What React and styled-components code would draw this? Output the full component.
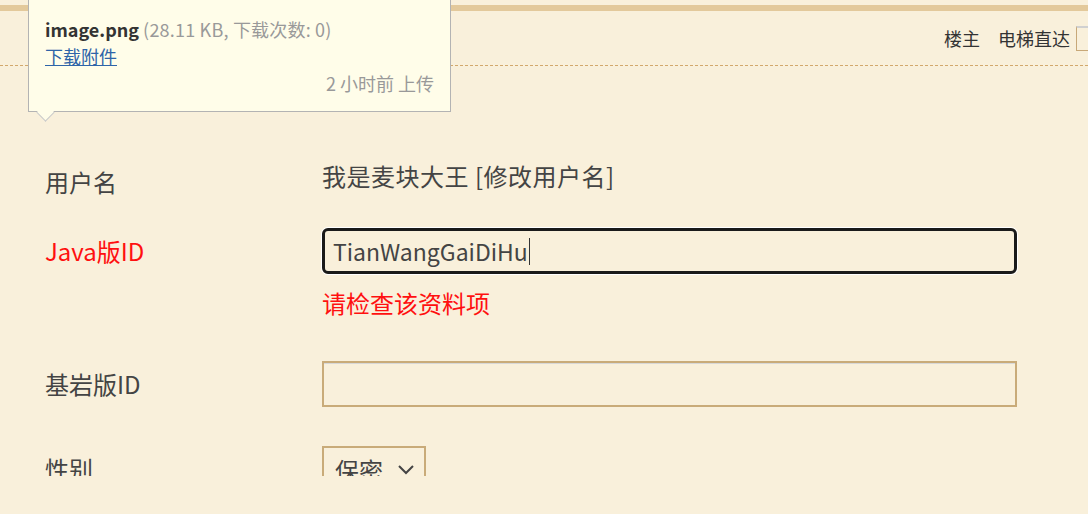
import React from 'react'
import styled, { createGlobalStyle } from 'styled-components'

const GlobalStyle = createGlobalStyle`
body {
    margin: 0;
    background: #f9f0db;
    font-family: "Noto Sans CJK SC", "Noto Sans", sans-serif;
    color: #444;
}
`

const Page = styled.div`
position: relative;
height: 476px;
overflow: hidden;
`

const Header = styled.div`
margin-top: 5px;
border-top: 6px solid #e3c99b;
height: 54px;
border-bottom: 1px dashed #d2a86c;
display: flex;
justify-content: flex-end;
align-items: center;
gap: 18px;
font-size: 18px;
color: #333;
`

const NavItem = styled.span`
line-height: 24px;
`

const JumpGroup = styled.div`
display: flex;
align-items: center;
gap: 6px;
margin-right: -16px;
`

const JumpInput = styled.div`
width: 26px;
height: 22px;
border: 1px solid #c8a878;
border-top: 2px solid #d0d0d0;
`

const Tip = styled.div`
position: absolute;
left: 28px;
top: -1px;
width: 389px;
padding: 16px 16px 14px 16px;
background: #fffde9;
border: 1px solid #b3b3b3;
font-size: 18px;
line-height: 27px;
&::after {
    content: "";
    position: absolute;
    left: 10px;
    bottom: -8px;
    width: 12px;
    height: 12px;
    background: #fffde9;
    border-right: 1px solid #c8c8c8;
    border-bottom: 1px solid #c8c8c8;
    transform: rotate(45deg);
}
`

const FileName = styled.b`
color: #333;
font-weight: 700;
`

const Muted = styled.span`
color: #999;
letter-spacing: 0.2px;
`

const DownloadLink = styled.a`
color: #2e64a8;
text-decoration: underline;
display: block;
`

const TipTime = styled.div`
color: #999;
text-align: right;
`

const Form = styled.div`
padding: 89px 0 0 45px;
`

const Row = styled.div`
display: grid;
grid-template-columns: 277px 695px;
align-items: center;
margin-bottom: ${props => props.$mb}px;
`

const Label = styled.div`
font-size: 24px;
line-height: 46px;
color: ${props => (props.$error ? '#ff1010' : '#444')};
padding-top: ${props => props.$shift || 0}px;
`

const Value = styled.div`
align-self: start;
margin-top: -2px;
font-size: 24px;
line-height: 46px;
color: #444;
letter-spacing: 0.5px;
`

const FocusBox = styled.div`
box-sizing: border-box;
height: 46px;
border: 3px solid #1a1a1a;
border-radius: 6px;
box-shadow: 0 0 0 1px #fff;
display: flex;
align-items: center;
padding-left: 8px;
font-size: 23px;
color: #444;
`

const Caret = styled.span`
display: inline-block;
width: 1px;
height: 27px;
background: #333;
margin-left: 1px;
`

const TextBox = styled.div`
box-sizing: border-box;
height: 46px;
border: 2px solid #c9ab79;
box-shadow: inset 0 1px 0 #d8d8d8;
`

const ErrorText = styled.div`
grid-column: 2;
font-size: 24px;
line-height: 30px;
color: #ff1010;
margin-top: 14px;
`

const Select = styled.div`
box-sizing: border-box;
width: 104px;
height: 46px;
border: 2px solid #c9ab79;
display: flex;
align-items: center;
justify-content: space-between;
padding: 0 9px 0 11px;
font-size: 24px;
color: #444;
`

const Chevron = () => (
    <svg width="18" height="12" viewBox="0 0 18 12">
        <path d="M2 3 L9 10 L16 3" fill="none" stroke="#444" strokeWidth="2" />
    </svg>
)

export default function App() {
    return (
        <>
            <GlobalStyle />
            <Page>
                <Header>
                    <NavItem>楼主</NavItem>
                    <JumpGroup>
                        <NavItem>电梯直达</NavItem>
                        <JumpInput />
                    </JumpGroup>
                </Header>
                <Tip>
                    <div>
                        <FileName>image.png</FileName> <Muted>(28.11 KB, 下载次数: 0)</Muted>
                    </div>
                    <DownloadLink href="#">下载附件</DownloadLink>
                    <TipTime>2 小时前 上传</TipTime>
                </Tip>
                <Form>
                    <Row $mb={23}>
                        <Label $shift={4}>用户名</Label>
                        <Value>我是麦块大王 [修改用户名]</Value>
                    </Row>
                    <Row $mb={43}>
                        <Label $error>Java版ID</Label>
                        <FocusBox>TianWangGaiDiHu<Caret /></FocusBox>
                        <ErrorText>请检查该资料项</ErrorText>
                    </Row>
                    <Row $mb={39}>
                        <Label>基岩版ID</Label>
                        <TextBox />
                    </Row>
                    <Row $mb={0}>
                        <Label>性别</Label>
                        <Select>保密<Chevron /></Select>
                    </Row>
                </Form>
            </Page>
        </>
    )
}
